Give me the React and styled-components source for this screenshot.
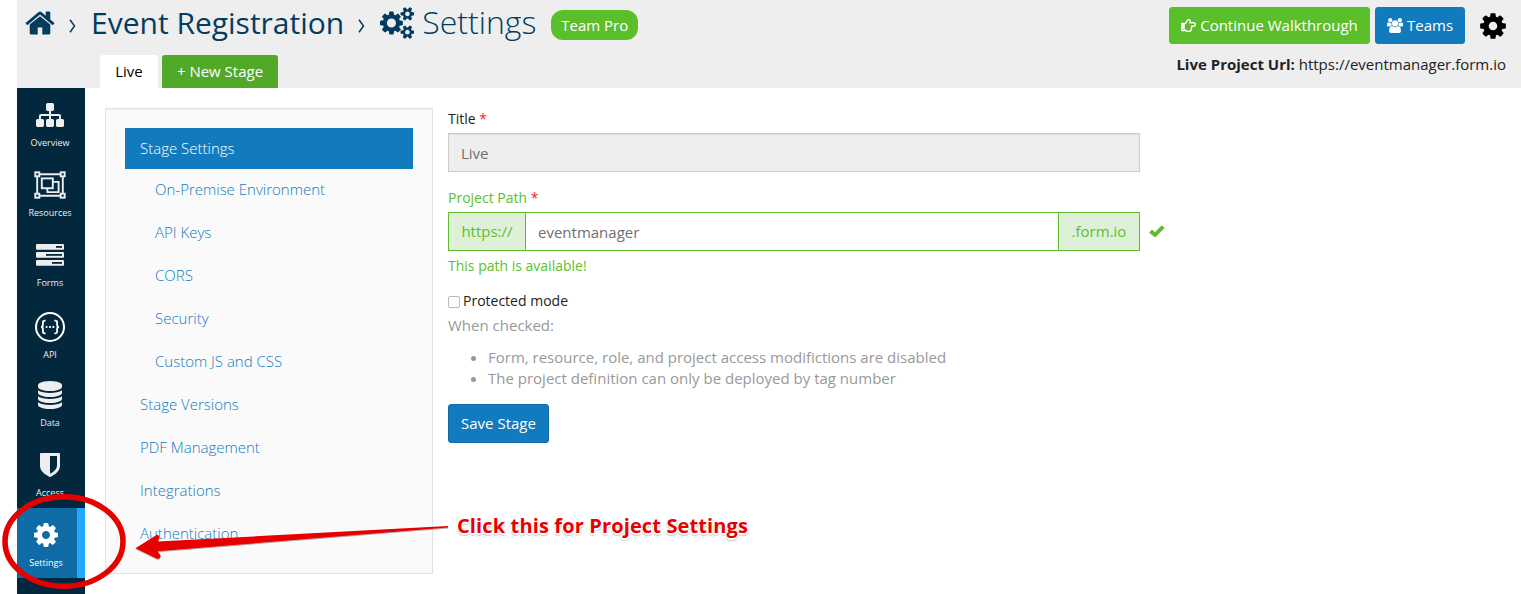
import React from "react";
import styled, { createGlobalStyle, css } from "styled-components";
import { FaRegHandPointRight } from "react-icons/fa";

const GlobalStyle = createGlobalStyle`
  * { box-sizing: border-box; }
  body {
    margin: 0;
    background: #fff;
    color: #222;
    font-family: "Open Sans", "Noto Sans", sans-serif;
    font-size: 15px;
    line-height: 21px;
    overflow: hidden;
  }
`;

const Page = styled.div`
  position: relative;
  height: 594px;
  padding-left: 17px;
  overflow: hidden;
`;

const Header = styled.header`
  display: flex;
  justify-content: space-between;
  height: 88px;
  background: #eee;
`;

const HeaderLeft = styled.div`
  display: flex;
  flex-direction: column;
  justify-content: space-between;
`;

const Breadcrumb = styled.div`
  display: flex;
  align-items: center;
  height: 46px;
  padding-left: 7px;
  color: #023c5e;
  white-space: nowrap;
`;

const Separator = styled.svg`
  width: 7px;
  height: 14px;
  margin: 5px ${(p) => p.$right}px 0 ${(p) => p.$left}px;
  flex: none;
`;

const Crumb = styled.span`
  width: ${(p) => p.$width}px;
  margin-left: ${(p) => (p.$light ? 8 : 0)}px;
  margin-bottom: ${(p) => (p.$light ? 2 : 0)}px;
  font-size: ${(p) => (p.$light ? 32 : 30)}px;
  line-height: ${(p) => (p.$light ? 44 : 46)}px;
  font-weight: ${(p) => (p.$light ? 300 : 400)};
`;

const Badge = styled.span`
  display: flex;
  align-items: center;
  justify-content: center;
  width: 87px;
  height: 30px;
  margin: 4px 0 0 14px;
  border-radius: 12px;
  background: #5bbf2c;
  color: #fff;
  font-size: 15px;
`;

const Tabs = styled.div`
  display: flex;
  gap: 4px;
  padding-left: 83px;
`;

const Tab = styled.div`
  display: flex;
  align-items: center;
  justify-content: center;
  width: ${(p) => p.$width}px;
  height: 33px;
  border-radius: 3px 3px 0 0;
  background: ${(p) => (p.$active ? "#fff" : "#52a829")};
  color: ${(p) => (p.$active ? "#000" : "#fff")};
`;

const HeaderRight = styled.div`
  display: flex;
  flex-direction: column;
  align-items: flex-end;
  padding: 7px 15px 0 0;
`;

const Actions = styled.div`
  display: flex;
  align-items: center;
`;

const Button = styled.button`
  display: flex;
  align-items: center;
  justify-content: center;
  gap: ${(p) => p.$gap || 0}px;
  width: ${(p) => p.$width}px;
  height: ${(p) => p.$height || 37}px;
  margin: 0 5px 0 0;
  padding: 0;
  border: 1px solid ${(p) => (p.$green ? "#5bbf2c" : p.$edge || "#127bbe")};
  border-radius: 3px;
  background: ${(p) => (p.$green ? "#5bbf2c" : "#127bbe")};
  color: #fff;
  font: 400 15px/21px "Open Sans", sans-serif;
  white-space: nowrap;
`;

const GearLink = styled.div`
  display: flex;
  margin: 0 -2px 0 8px;
  color: #000;
`;

const ProjectUrl = styled.div`
  margin-top: 9px;
  line-height: 22px;
  white-space: nowrap;
`;

const Body = styled.div`
  display: flex;
  height: 506px;
`;

const Nav = styled.nav`
  width: 68px;
  flex: none;
  background: #03273d;
`;

const NavItem = styled.div`
  display: flex;
  flex-direction: column;
  align-items: center;
  height: 70px;
  padding-right: 2px;
  color: #eee;
  ${(p) =>
    p.$active &&
    css`
      background: #0f6ba6;
      border-right: 8px solid #22a7ff;
      color: #fff;
    `}
`;

const NavIcon = styled.div`
  display: flex;
  align-items: center;
  justify-content: center;
  height: 34px;
  margin-top: ${(p) => p.$top}px;
`;

const NavLabel = styled.span`
  margin-top: 5px;
  font-size: 9px;
  line-height: 12px;
`;

const SettingsMenu = styled.aside`
  width: 328px;
  height: 466px;
  flex: none;
  margin: 20px 15px 0 20px;
  padding: 19px;
  border: 1px solid #e3e3e3;
  background: #fafafa;
  box-shadow: inset 0 1px 1px rgba(0, 0, 0, 0.05);
`;

const MenuItem = styled.div`
  height: 41px;
  margin-bottom: ${(p) => (p.$active ? 0 : 2)}px;
  padding-left: ${(p) => (p.$nested ? 30 : 15)}px;
  background: ${(p) => (p.$active ? "#127bbe" : "transparent")};
  color: ${(p) => (p.$active ? "#fff" : "#127bbe")};
  font-weight: 300;
  line-height: 41px;
`;

const Form = styled.main`
  width: 720px;
  padding-top: 20px;
`;

const Label = styled.div`
  color: ${(p) => (p.$valid ? "#5bbf2c" : "#222")};
  font-size: 14px;
  line-height: 21px;
`;

const Required = styled.span`
  color: #f21c2c;
`;

const Row = styled.div`
  display: flex;
  align-items: center;
`;

const Check = styled.svg`
  width: 16px;
  height: 13px;
  margin-bottom: 1px;
`;

const TextField = styled.div`
  width: 692px;
  height: 39px;
  margin: 4px 0 15px;
  padding: 0 12px;
  border: 1px solid #ccc;
  background: #eee;
  box-shadow: inset 0 1px 1px rgba(0, 0, 0, 0.075);
  color: #6f6f6f;
  line-height: 39px;
`;

const PathGroup = styled.div`
  display: flex;
  width: 692px;
  height: 39px;
  margin: 4px 9px 4px 0;
  border: 1px solid #5bbf2c;
  line-height: 37px;
`;

const Addon = styled.span`
  width: ${(p) => p.$width}px;
  background: #dff0d8;
  color: #5bbf2c;
  text-align: center;
`;

const PathValue = styled.span`
  flex: 1;
  padding-left: 12px;
  border: solid #5bbf2c;
  border-width: 0 1px;
  color: #6f6f6f;
  line-height: 39px;
`;

const CheckRow = styled(Row)`
  gap: 3px;
  margin-top: 14px;
  font-size: 14px;
`;

const CheckBox = styled.span`
  width: 12px;
  height: 12px;
  margin-top: 2px;
  border: 1px solid #bbb;
  border-radius: 2px;
  background: #fff;
`;

const Help = styled.div`
  margin-top: 4px;
  color: #999;
`;

const HelpList = styled.ul`
  margin: 11px 0 15px;
  padding-left: 40px;
  color: #999;
`;

const Overlay = styled.svg`
  position: absolute;
  left: 0;
  top: 0;
  pointer-events: none;
`;

const Callout = styled.div`
  position: absolute;
  left: 457px;
  top: 512px;
  color: #e60000;
  font-size: 20px;
  font-weight: 700;
  letter-spacing: 0.13px;
  line-height: 28px;
  white-space: nowrap;
  text-shadow: -1px 0 #fff, 1px 0 #fff, 0 -1px #fff, -1px 1px #fff, 1px 1px #fff, 0 2px #fff,
    0 2px 2px #555;
`;

const PATHS = {
  home: "M1472 992v480q0 26-19 45t-45 19h-384v-384h-256v384h-384q-26 0-45-19t-19-45v-480q0-1 .5-3t.5-3l575-474 575 474q1 2 1 6zm223-69l-62 74q-8 9-21 11h-3q-13 0-21-7l-692-577-692 577q-12 8-24 7-13-2-21-11l-62-74q-8-10-7-23.5t11-21.5l719-599q32-26 76-26t76 26l244 204v-195q0-14 9-23t23-9h192q14 0 23 9t9 23v408l219 182q10 8 11 21.5t-7 23.5z",
  cog: "M1152 896q0-106-75-181t-181-75-181 75-75 181 75 181 181 75 181-75 75-181zm512-109v222q0 12-8 23t-20 13l-185 28q-19 54-39 91 35 50 107 138 10 12 10 25t-9 23q-27 37-99 108t-94 71q-12 0-26-9l-138-108q-44 23-91 38-16 136-29 186-7 28-36 28h-222q-14 0-24.5-8.5t-11.5-21.5l-28-184q-49-16-90-37l-141 107q-10 9-25 9-14 0-25-11-126-114-165-168-7-10-7-23 0-12 8-23 15-21 51-66.5t54-70.5q-27-50-41-99l-183-27q-13-2-21-12.5t-8-23.5v-222q0-12 8-23t19-13l186-28q14-46 39-92-40-57-107-138-10-12-10-24 0-10 9-23 26-36 98.5-107.5t94.5-71.5q13 0 26 10l138 107q44-23 91-38 16-136 29-186 7-28 36-28h222q14 0 24.5 8.5t11.5 21.5l28 184q49 16 90 37l142-107q9-9 24-9 13 0 25 10 129 119 165 170 7 8 7 22 0 12-8 23-15 21-51 66.5t-54 70.5q26 50 41 98l183 28q13 2 21 12.5t8 23.5z",
  cogs: "M832 896q0-106-75-181t-181-75-181 75-75 181 75 181 181 75 181-75 75-181zm768 512q0-52-38-90t-90-38-90 38-38 90q0 53 37.5 90.5t90.5 37.5 90.5-37.5 37.5-90.5zm0-1024q0-52-38-90t-90-38-90 38-38 90q0 53 37.5 90.5t90.5 37.5 90.5-37.5 37.5-90.5zm-384 421v185q0 10-7 19.5t-16 10.5l-155 24q-11 35-32 76 34 48 90 115 7 11 7 20 0 12-7 19-23 30-82.5 89.5t-78.5 59.5q-11 0-21-7l-115-90q-37 19-77 31-11 108-23 155-7 24-30 24h-186q-11 0-20-7.5t-10-17.5l-23-153q-34-10-75-31l-118 89q-7 7-20 7-11 0-21-8-144-133-144-160 0-9 7-19 10-14 41-53t47-61q-23-44-35-82l-152-24q-10-1-17-9.5t-7-19.5v-185q0-10 7-19.5t16-10.5l155-24q11-35 32-76-34-48-90-115-7-11-7-20 0-12 7-20 22-30 82-89t79-59q11 0 21 7l115 90q34-18 77-32 11-108 23-154 7-24 30-24h186q11 0 20 7.5t10 17.5l23 153q34 10 75 31l118-89q8-7 20-7 11 0 21 8 144 133 144 160 0 8-7 19-12 16-42 54t-45 60q23 48 34 82l152 23q10 2 17 10.5t7 19.5zm640 533v140q0 16-149 31-12 27-30 52 51 113 51 138 0 4-4 7-122 71-124 71-8 0-46-47t-52-68q-20 2-30 2t-30-2q-14 21-52 68t-46 47q-2 0-124-71-4-3-4-7 0-25 51-138-18-25-30-52-149-15-149-31v-140q0-16 149-31 13-29 30-52-51-113-51-138 0-4 4-7 4-2 35-20t59-34 30-16q8 0 46 46.5t52 67.5q20-2 30-2t30 2q51-71 92-112l6-2q4 0 124 70 4 3 4 7 0 25-51 138 17 23 30 52 149 15 149 31zm0-1024v140q0 16-149 31-12 27-30 52 51 113 51 138 0 4-4 7-122 71-124 71-8 0-46-47t-52-68q-20 2-30 2t-30-2q-14 21-52 68t-46 47q-2 0-124-71-4-3-4-7 0-25 51-138-18-25-30-52-149-15-149-31v-140q0-16 149-31 13-29 30-52-51-113-51-138 0-4 4-7 4-2 35-20t59-34 30-16q8 0 46 46.5t52 67.5q20-2 30-2t30 2q51-71 92-112l6-2q4 0 124 70 4 3 4 7 0 25-51 138 17 23 30 52 149 15 149 31z",
  users: "M593 896q-162 5-265 128h-134q-82 0-138-40.5t-56-118.5q0-353 124-353 6 0 43.5 21t97.5 42.5 119 21.5q67 0 133-23-5 37-5 66 0 139 81 256zm1071 637q0 120-73 189.5t-194 69.5h-874q-121 0-194-69.5t-73-189.5q0-53 3.5-103.5t14-109 26.5-108.5 43-97.5 62-81 85.5-53.5 111.5-20q10 0 43 21.5t73 48 107 48 135 21.5 135-21.5 107-48 73-48 43-21.5q61 0 111.5 20t85.5 53.5 62 81 43 97.5 26.5 108.5 14 109 3.5 103.5zm-1024-1277q0 106-75 181t-181 75-181-75-75-181 75-181 181-75 181 75 75 181zm704 384q0 159-112.5 271.5t-271.5 112.5-271.5-112.5-112.5-271.5 112.5-271.5 271.5-112.5 271.5 112.5 112.5 271.5zm576 225q0 78-56 118.5t-138 40.5h-134q-103-123-265-128 81-117 81-256 0-29-5-66 66 23 133 23 59 0 119-21.5t97.5-42.5 43.5-21q124 0 124 353zm-128-609q0 106-75 181t-181 75-181-75-75-181 75-181 181-75 181 75 75 181z",
  sitemap: "M1792 1248v320q0 40-28 68t-68 28h-320q-40 0-68-28t-28-68v-320q0-40 28-68t68-28h96v-192h-512v192h96q40 0 68 28t28 68v320q0 40-28 68t-68 28h-320q-40 0-68-28t-28-68v-320q0-40 28-68t68-28h96v-192h-512v192h96q40 0 68 28t28 68v320q0 40-28 68t-68 28h-320q-40 0-68-28t-28-68v-320q0-40 28-68t68-28h96v-192q0-52 38-90t90-38h512v-192h-96q-40 0-68-28t-28-68v-320q0-40 28-68t68-28h320q40 0 68 28t28 68v320q0 40-28 68t-68 28h-96v192h512q52 0 90 38t38 90v192h96q40 0 68 28t28 68z",
  database: "M896 768q237 0 443-43t325-127v170q0 69-103 128t-280 93.5-385 34.5-385-34.5-280-93.5-103-128v-170q119 84 325 127t443 43zm0 768q237 0 443-43t325-127v170q0 69-103 128t-280 93.5-385 34.5-385-34.5-280-93.5-103-128v-170q119 84 325 127t443 43zm0-384q237 0 443-43t325-127v170q0 69-103 128t-280 93.5-385 34.5-385-34.5-280-93.5-103-128v-170q119 84 325 127t443 43zm0-1152q208 0 385 34.5t280 93.5 103 128v128q0 69-103 128t-280 93.5-385 34.5-385-34.5-280-93.5-103-128v-128q0-69 103-128t280-93.5 385-34.5z",
  shield: "M1344 960v-640h-448v1137q119-63 213-137 235-184 235-360zm192-768v768q0 86-33.5 170.5t-83 150-118 127.5-126.5 103-121 77.5-89.5 49.5-42.5 20q-12 6-26 6t-26-6q-16-7-42.5-20t-89.5-49.5-121-77.5-126.5-103-118-127.5-83-150-33.5-170.5v-768q0-26 19-45t45-19h1152q26 0 45 19t19 45z",
};

const BOXES = {
  cogs: [-64, 1920],
  users: [0, 1920],
};

const IconSvg = styled.svg`
  display: block;
  flex: none;
`;

function Icon({ name, size }) {
  const [x, w] = BOXES[name] || [0, 1792];
  return (
    <IconSvg width={(size * w) / 1792} height={size} viewBox={`${x} 0 ${w} 1792`} fill="currentColor">
      <path d={PATHS[name]} />
    </IconSvg>
  );
}

function ResourcesIcon() {
  return (
    <IconSvg width="32" height="28" viewBox="0 0 32 28" fill="none" stroke="currentColor" strokeWidth="1.9">
      <path d="M5.5 3.2h21M5.5 24.8h21M3.2 5v18M28.8 5v18" />
      <rect x="1.3" y="1.3" width="4" height="4" />
      <rect x="26.7" y="1.3" width="4" height="4" />
      <rect x="1.3" y="22.7" width="4" height="4" />
      <rect x="26.7" y="22.7" width="4" height="4" />
      <rect x="7.8" y="7.4" width="11" height="9.8" />
      <path d="M18.8 10.9h5.8v10.2H13.4v-4" />
    </IconSvg>
  );
}

function FormsIcon() {
  return (
    <IconSvg width="28" height="22" viewBox="0 0 28 22">
      {[[0, 20], [8, 10], [16, 16]].map(([y, x]) => (
        <g key={y}>
          <rect x="0" y={y} width="28" height="5.8" rx="1" fill="currentColor" />
          <rect x={x} y={y + 2} width={26 - x} height="1.8" fill="#03273d" />
        </g>
      ))}
    </IconSvg>
  );
}

function ApiIcon() {
  return (
    <IconSvg width="30" height="30" viewBox="0 0 30 30" fill="none" stroke="#fff" strokeWidth="1.8">
      <circle cx="15" cy="15" r="14" strokeWidth="2" />
      <path d="M10.6 8.6H9.8q-1.9 0-1.9 1.9v2.3q0 2.1-1.8 2.2 1.8.1 1.8 2.2v2.3q0 1.9 1.9 1.9h.8" />
      <path d="M19.4 8.6h.8q1.9 0 1.9 1.9v2.3q0 2.1 1.8 2.2-1.8.1-1.8 2.2v2.3q0 1.9-1.9 1.9h-.8" />
      <path d="M10.7 15h1.7M14.1 15h1.7M17.5 15h1.7" />
    </IconSvg>
  );
}

const NAV = [
  { label: "Overview", icon: <Icon name="sitemap" size={28} />, top: 10 },
  { label: "Resources", icon: <ResourcesIcon />, top: 10 },
  { label: "Forms", icon: <FormsIcon />, top: 10 },
  { label: "API", icon: <ApiIcon />, top: 12 },
  { label: "Data", icon: <Icon name="database" size={28} />, top: 10 },
  { label: "Access", icon: <Icon name="shield" size={28} />, top: 10 },
  { label: "Settings", icon: <Icon name="cog" size={28} />, top: 10, active: true },
];

const MENU = [
  ["Stage Settings", false, true],
  ["On-Premise Environment", true],
  ["API Keys", true],
  ["CORS", true],
  ["Security", true],
  ["Custom JS and CSS", true],
  ["Stage Versions"],
  ["PDF Management"],
  ["Integrations"],
  ["Authentication"],
];

function Chevron({ left, right }) {
  return (
    <Separator $left={left} $right={right} viewBox="0 0 7 14" fill="none" stroke="currentColor" strokeWidth="1.5">
      <path d="M1 .8L5.5 7 1 13.2" />
    </Separator>
  );
}

export default function App() {
  return (
    <Page>
      <GlobalStyle />
      <Header>
        <HeaderLeft>
          <Breadcrumb>
            <Icon name="home" size={32} />
            <Chevron left={13} right={15} />
            <Crumb $width={254}>Event Registration</Crumb>
            <Chevron left={13} right={15} />
            <Icon name="cogs" size={32} />
            <Crumb $width={115} $light>Settings</Crumb>
            <Badge>Team Pro</Badge>
          </Breadcrumb>
          <Tabs>
            <Tab $width={58} $active>Live</Tab>
            <Tab $width={116}>+ New Stage</Tab>
          </Tabs>
        </HeaderLeft>
        <HeaderRight>
          <Actions>
            <Button $width={201} $green $gap={4}>
              <FaRegHandPointRight size={15} />
              Continue Walkthrough
            </Button>
            <Button $width={90} $gap={4}>
              <Icon name="users" size={15} />
              Teams
            </Button>
            <GearLink>
              <Icon name="cog" size={30} />
            </GearLink>
          </Actions>
          <ProjectUrl>
            <b>Live Project Url:</b> https://eventmanager.form.io
          </ProjectUrl>
        </HeaderRight>
      </Header>
      <Body>
        <Nav>
          {NAV.map((item) => (
            <NavItem key={item.label} $active={item.active}>
              <NavIcon $top={item.top}>{item.icon}</NavIcon>
              <NavLabel>{item.label}</NavLabel>
            </NavItem>
          ))}
        </Nav>
        <SettingsMenu>
          {MENU.map(([label, nested, active]) => (
            <MenuItem key={label} $nested={nested} $active={active}>
              {label}
            </MenuItem>
          ))}
        </SettingsMenu>
        <Form>
          <Label>
            Title <Required>*</Required>
          </Label>
          <TextField>Live</TextField>
          <Label $valid>
            Project Path <Required>*</Required>
          </Label>
          <Row>
            <PathGroup>
              <Addon $width={76}>https://</Addon>
              <PathValue>eventmanager</PathValue>
              <Addon $width={80}>.form.io</Addon>
            </PathGroup>
            <Check viewBox="0 0 16 13" fill="#5bbf2c">
              <path d="M.4 7.2L2.6 5q.5-.4 1 0L6 7.2 12.3.7q.5-.4 1 0l1.8 1.8q.4.5 0 1L6.6 12q-.5.4-1 0L.4 8.1q-.3-.4 0-.9z" />
            </Check>
          </Row>
          <Label $valid>This path is available!</Label>
          <CheckRow>
            <CheckBox />
            Protected mode
          </CheckRow>
          <Help>When checked:</Help>
          <HelpList>
            <li>Form, resource, role, and project access modifictions are disabled</li>
            <li>The project definition can only be deployed by tag number</li>
          </HelpList>
          <Button $width={101} $height={39} $edge="#106ca6">
            Save Stage
          </Button>
        </Form>
      </Body>
      <Overlay width="460" height="594" viewBox="0 0 460 594">
        <defs>
          <filter id="drop" x="-5%" y="-20%" width="110%" height="150%">
            <feDropShadow dx="0" dy="0.8" stdDeviation="0.6" floodColor="#000" floodOpacity="0.4" />
          </filter>
        </defs>
        <ellipse cx="64" cy="541.5" rx="59" ry="44.7" fill="none" stroke="#e60000" strokeWidth="5.6" />
        <path
          d="M448 526L158 541.6 159.3 538Q160 534.5 156.5 535L135.5 548.2 156.5 558.5Q161 559.5 160.5 555.5L157.5 551.2 448 527.4Z"
          fill="#e60000"
          filter="url(#drop)"
        />
      </Overlay>
      <Callout>Click this for Project Settings</Callout>
    </Page>
  );
}
